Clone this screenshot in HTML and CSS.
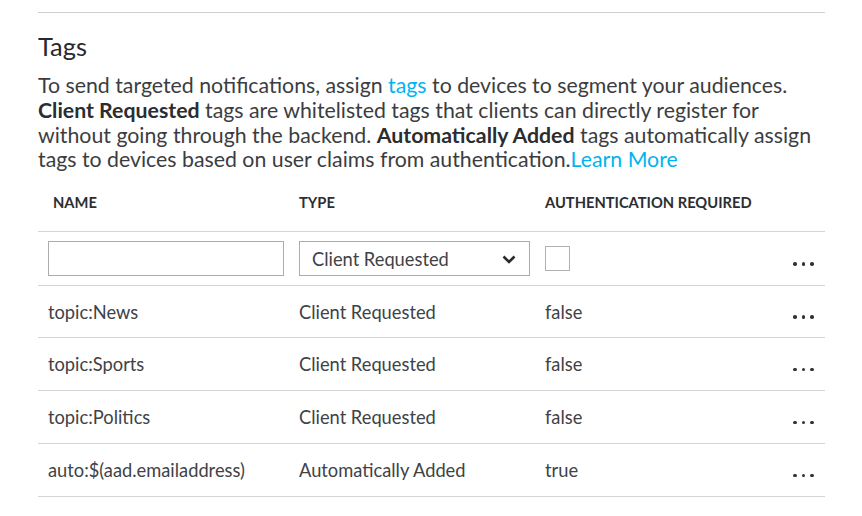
FILE: index.html
```html
<!DOCTYPE html>
<html lang="en">
<head>
<meta charset="utf-8">
<title>Tags</title>
<link rel="stylesheet" href="styles.css">
</head>
<body>
<div class="page">
  <div class="rule"></div>
  <h2 class="title">Tags</h2>
  <p class="intro">To send targeted notifications, assign <a class="link" href="#">tags</a> to devices to segment your audiences.<br><b>Client Requested</b> tags are whitelisted tags that clients can directly register for<br>without going through the backend. <b>Automatically Added</b> tags automatically assign<br>tags to devices based on user claims from authentication.<a class="link" href="#">Learn More</a></p>

  <div class="table">
    <div class="row head">
      <div class="cell first">NAME</div>
      <div class="cell">TYPE</div>
      <div class="cell">AUTHENTICATION REQUIRED</div>
      <div class="cell"></div>
    </div>
    <div class="row edit">
      <div class="cell"><input class="text-input" type="text" aria-label="Name"></div>
      <div class="cell">
        <div class="select">
          <span>Client Requested</span>
          <svg class="chev" width="14" height="9" viewBox="0 0 14 9"><path d="M1.5 1.5 L7 7 L12.5 1.5" fill="none" stroke="#2b2b2b" stroke-width="2.6"/></svg>
        </div>
      </div>
      <div class="cell"><input class="check" type="checkbox" aria-label="Authentication required"></div>
      <div class="cell"><span class="dots"><i></i><i></i><i></i></span></div>
    </div>
    <div class="row">
      <div class="cell">topic:News</div>
      <div class="cell">Client Requested</div>
      <div class="cell">false</div>
      <div class="cell"><span class="dots"><i></i><i></i><i></i></span></div>
    </div>
    <div class="row">
      <div class="cell">topic:Sports</div>
      <div class="cell">Client Requested</div>
      <div class="cell">false</div>
      <div class="cell"><span class="dots"><i></i><i></i><i></i></span></div>
    </div>
    <div class="row">
      <div class="cell">topic:Politics</div>
      <div class="cell">Client Requested</div>
      <div class="cell">false</div>
      <div class="cell"><span class="dots"><i></i><i></i><i></i></span></div>
    </div>
    <div class="row">
      <div class="cell">auto:$(aad.emailaddress)</div>
      <div class="cell">Automatically Added</div>
      <div class="cell">true</div>
      <div class="cell"><span class="dots"><i></i><i></i><i></i></span></div>
    </div>
  </div>
</div>
</body>
</html>
```

FILE: styles.css
```css
* { box-sizing: border-box; }
body {
  margin: 0;
  background: #fff;
  font-family: "Lato", "Noto Sans", sans-serif;
  color: #3a3a3a;
}
.page {
  padding: 12px 37px 0 38px;
}
.rule {
  height: 1px;
  background: #cfcfcf;
}
.title {
  margin: 18px 0 0;
  font-size: 25.4px;
  line-height: 30px;
  font-weight: 400;
  color: #262a30;
}
.intro {
  margin: 12px 0 0;
  font-size: 21.3px;
  line-height: 24.8px;
  white-space: nowrap;
  color: #3b3d41;
}
.intro b {
  font-weight: 700;
  color: #2a2d31;
}
.link {
  color: #00b4f0;
  text-decoration: none;
}
.row {
  display: grid;
  grid-template-columns: 251px 246px 1fr 55px;
  align-items: center;
  height: 53px;
  border-bottom: 1px solid #d4d4d4;
  font-size: 18.3px;
  color: #404246;
}
.row.edit {
  height: 54px;
}
.row.edit + .row {
  height: 52px;
}
.row.head {
  height: auto;
  padding: 20px 0 19px;
  font-size: 14.7px;
  line-height: 20px;
  font-weight: 700;
  color: #2c2e31;
}
.cell {
  padding-left: 10px;
  white-space: nowrap;
}
.head .first {
  padding-left: 15px;
}
.text-input {
  display: block;
  width: 236px;
  height: 35px;
  margin: 0;
  border: 1px solid #acacac;
  border-radius: 0;
  background: #fff;
  font: inherit;
}
.select {
  display: flex;
  align-items: center;
  justify-content: space-between;
  width: 231px;
  height: 35px;
  padding: 0 13px 0 12px;
  border: 1px solid #acacac;
  color: #404246;
}
.chev {
  display: block;
  margin-top: 1px;
}
.check {
  appearance: none;
  -webkit-appearance: none;
  display: block;
  width: 25px;
  height: 25px;
  margin: 0;
  border: 1px solid #b1b1b1;
  background: #fff;
}
.dots {
  display: flex;
  gap: 5px;
  margin-left: 13px;
  margin-top: 11px;
}
.dots i {
  display: block;
  width: 3.5px;
  height: 3.5px;
  border-radius: 50%;
  background: #2f3236;
}
```
